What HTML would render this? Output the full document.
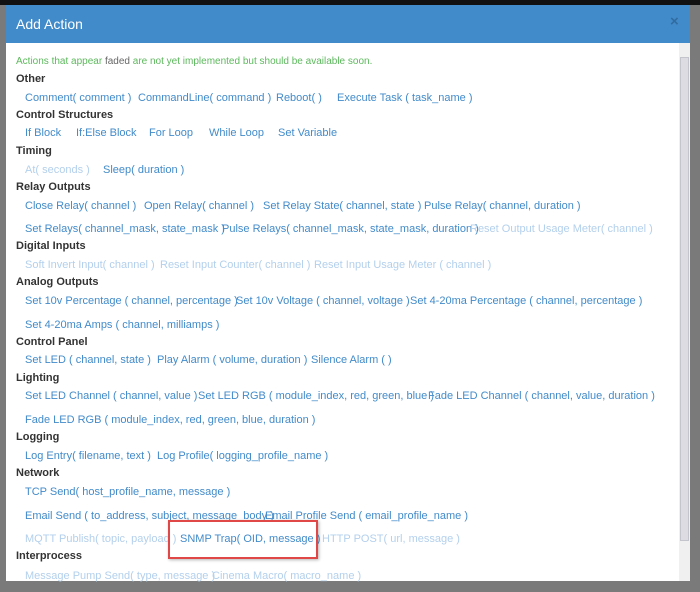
<!DOCTYPE html>
<html><head><meta charset="utf-8"><style>
body{margin:0;width:700px;height:592px;background:#7a7a7a;position:relative;overflow:hidden;font-family:"Liberation Sans",sans-serif;}
.top{position:absolute;left:0;top:0;width:700px;height:5px;background:#111;}
.modal{position:absolute;left:6px;top:5px;width:684px;height:576px;background:#fff;}
.hdr{position:absolute;left:6px;top:5px;width:684px;height:38px;background:#428bca;}
.hdr span{position:absolute;left:10px;top:11px;color:#fff;font-size:14px;}
.x{position:absolute;left:670px;top:13px;color:#2a5f8f;font-size:15px;font-weight:bold;opacity:.7}
.t{position:absolute;font-size:11px;line-height:13px;white-space:nowrap;color:#428bca;}
.h{color:#333;font-weight:bold;left:16px;}
.f{color:#b3d0ec;}
.g{color:#5cb85c;font-size:10px;}
.sb{position:absolute;left:679px;top:43px;width:11px;height:538px;background:#f0f0f0;}
.th{position:absolute;left:680px;top:57px;width:9px;height:484px;background:#dcdce2;border:1px solid #c4c4cc;box-sizing:border-box;}
.box{position:absolute;left:168px;top:520px;width:150px;height:39px;border:2px solid #e04848;box-sizing:border-box;box-shadow:1px 1px 3px rgba(0,0,0,.3);}
</style></head><body>
<div class="top"></div>
<div class="modal"></div>
<div class="hdr"><span>Add Action</span></div>
<div class="x">×</div>
<div class="sb"></div><div class="th"></div>
<div class="t g" style="left:16px;top:55px">Actions that appear <span style="color:#666">faded</span> are not yet implemented but should be available soon.</div>
<div class="t h" style="top:73px">Other</div>
<div class="t" style="left:25px;top:92px">Comment( comment )</div>
<div class="t" style="left:138px;top:92px">CommandLine( command )</div>
<div class="t" style="left:276px;top:92px">Reboot( )</div>
<div class="t" style="left:337px;top:92px">Execute Task ( task_name )</div>
<div class="t h" style="top:109px">Control Structures</div>
<div class="t" style="left:25px;top:127px">If Block</div>
<div class="t" style="left:76px;top:127px">If:Else Block</div>
<div class="t" style="left:149px;top:127px">For Loop</div>
<div class="t" style="left:209px;top:127px">While Loop</div>
<div class="t" style="left:278px;top:127px">Set Variable</div>
<div class="t h" style="top:145px">Timing</div>
<div class="t f" style="left:25px;top:164px">At( seconds )</div>
<div class="t" style="left:103px;top:164px">Sleep( duration )</div>
<div class="t h" style="top:181px">Relay Outputs</div>
<div class="t" style="left:25px;top:200px">Close Relay( channel )</div>
<div class="t" style="left:144px;top:200px">Open Relay( channel )</div>
<div class="t" style="left:263px;top:200px">Set Relay State( channel, state )</div>
<div class="t" style="left:424px;top:200px">Pulse Relay( channel, duration )</div>
<div class="t" style="left:25px;top:223px">Set Relays( channel_mask, state_mask )</div>
<div class="t" style="left:222px;top:223px">Pulse Relays( channel_mask, state_mask, duration )</div>
<div class="t f" style="left:470px;top:223px">Reset Output Usage Meter( channel )</div>
<div class="t h" style="top:240px">Digital Inputs</div>
<div class="t f" style="left:25px;top:259px">Soft Invert Input( channel )</div>
<div class="t f" style="left:160px;top:259px">Reset Input Counter( channel )</div>
<div class="t f" style="left:314px;top:259px">Reset Input Usage Meter ( channel )</div>
<div class="t h" style="top:276px">Analog Outputs</div>
<div class="t" style="left:25px;top:295px">Set 10v Percentage ( channel, percentage )</div>
<div class="t" style="left:236px;top:295px">Set 10v Voltage ( channel, voltage )</div>
<div class="t" style="left:410px;top:295px">Set 4-20ma Percentage ( channel, percentage )</div>
<div class="t" style="left:25px;top:319px">Set 4-20ma Amps ( channel, milliamps )</div>
<div class="t h" style="top:336px">Control Panel</div>
<div class="t" style="left:25px;top:354px">Set LED ( channel, state )</div>
<div class="t" style="left:157px;top:354px">Play Alarm ( volume, duration )</div>
<div class="t" style="left:311px;top:354px">Silence Alarm ( )</div>
<div class="t h" style="top:372px">Lighting</div>
<div class="t" style="left:25px;top:390px">Set LED Channel ( channel, value )</div>
<div class="t" style="left:198px;top:390px">Set LED RGB ( module_index, red, green, blue )</div>
<div class="t" style="left:428px;top:390px">Fade LED Channel ( channel, value, duration )</div>
<div class="t" style="left:25px;top:414px">Fade LED RGB ( module_index, red, green, blue, duration )</div>
<div class="t h" style="top:431px">Logging</div>
<div class="t" style="left:25px;top:450px">Log Entry( filename, text )</div>
<div class="t" style="left:157px;top:450px">Log Profile( logging_profile_name )</div>
<div class="t h" style="top:467px">Network</div>
<div class="t" style="left:25px;top:486px">TCP Send( host_profile_name, message )</div>
<div class="t" style="left:25px;top:510px">Email Send ( to_address, subject, message_body )</div>
<div class="t" style="left:265px;top:510px">Email Profile Send ( email_profile_name )</div>
<div class="t f" style="left:25px;top:533px">MQTT Publish( topic, payload )</div>
<div class="t" style="left:180px;top:533px">SNMP Trap( OID, message )</div>
<div class="t f" style="left:322px;top:533px">HTTP POST( url, message )</div>
<div class="box"></div>
<div class="t h" style="top:550px">Interprocess</div>
<div class="t f" style="left:25px;top:570px">Message Pump Send( type, message )</div>
<div class="t f" style="left:212px;top:570px">Cinema Macro( macro_name )</div>
</body></html>
